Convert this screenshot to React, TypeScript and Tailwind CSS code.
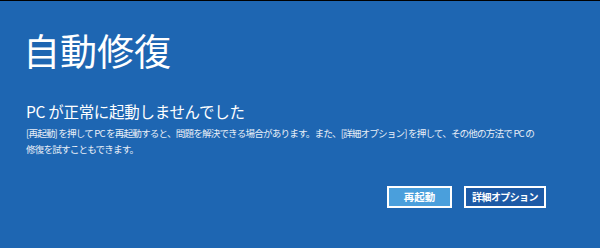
import React from 'react';

const font = { fontFamily: '"Noto Sans CJK JP", "Noto Sans", sans-serif' };

const App: React.FC = () => {
  return (
    <div className="w-[600px] h-[248px] bg-[#1e66b2] border-t border-black text-white overflow-hidden" style={font}>
      <div className="pl-[26px] pt-[25px]">
        <h1 className="-ml-[3px] text-[37px] leading-[48px] font-normal">自動修復</h1>
        <h2 className="mt-[26px] text-[15.5px] leading-[22px] tracking-[-0.3px] whitespace-nowrap">
          PC が正常に起動しませんでした
        </h2>
        <p className="mt-[3px] text-[9.6px] leading-[16px] tracking-[-0.85px] text-[#e8eef7] whitespace-nowrap">
          [再起動] を押して PC を再起動すると、問題を解決できる場合があります。また、[詳細オプション] を押して、その他の方法で PC の
          <br />
          修復を試すこともできます。
        </p>
      </div>
      <div className="flex justify-end gap-[12px] pr-[54px] mt-[29px]">
        <button className="w-[65px] h-[22px] border-2 border-white bg-[#4a9fdc] text-[10.5px] font-bold leading-none">
          再起動
        </button>
        <button className="w-[82px] h-[22px] border-2 border-white bg-[#1d5aa6] text-[10px] tracking-[-0.6px] font-bold leading-none whitespace-nowrap">
          詳細オプション
        </button>
      </div>
    </div>
  );
};

export default App;
